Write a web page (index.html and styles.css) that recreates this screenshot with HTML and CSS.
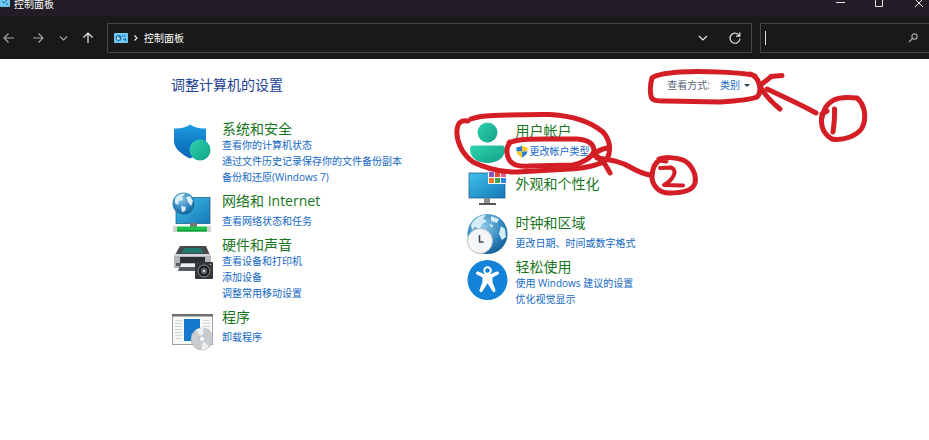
FILE: index.html
```html
<!DOCTYPE html>
<html lang="zh-CN">
<head>
    <meta charset="UTF-8">
    <meta name="viewport" content="width=device-width, initial-scale=1.0">
    <title>控制面板</title>
    <link rel="stylesheet" href="styles.css">
</head>
<body>
    <!-- 标题栏 -->
    <header class="titlebar">
        <svg class="title-icon" viewBox="0 0 10 8">
            <rect y="-6" width="10" height="13" rx="1" fill="#6fc9f2"/>
            <path d="M2 1l2 2 3-3M6 4h2" stroke="#17689f" fill="none"/>
        </svg>
        <span class="title-text">控制面板</span>
        <div class="window-buttons">
            <button type="button" aria-label="最小化"><svg viewBox="0 0 20 10"><path d="M5 2.500h9"/></svg></button>
            <button type="button" aria-label="最大化"><svg viewBox="0 0 20 10"><path d="M5.500-2v8.500h7V-2"/></svg></button>
            <button type="button" aria-label="关闭"><svg viewBox="0 0 20 10"><path d="M6-1l8 8M14-1L6 7"/></svg></button>
        </div>
    </header>

    <!-- 导航栏 -->
    <nav class="toolbar">
        <div class="nav-buttons">
            <button type="button" class="back" aria-label="后退"><svg viewBox="0 0 18 18"><path d="M14 9H4M8.500 4.500L4 9l4.500 4.500"/></svg></button>
            <button type="button" aria-label="前进"><svg viewBox="0 0 18 18"><path d="M4 9h10M9.500 4.500L14 9l-4.500 4.500"/></svg></button>
            <button type="button" aria-label="最近"><svg viewBox="0 0 18 18"><path d="M6 7.500L9.500 11 13 7.500"/></svg></button>
            <button type="button" class="up" aria-label="向上"><svg viewBox="0 0 18 18"><path d="M9 14V4M4.500 8.500L9 4l4.500 4.500"/></svg></button>
        </div>
        <div class="address">
            <svg class="address-icon" viewBox="0 0 14 10">
                <rect width="14" height="10" rx="1" fill="#6fc9f2"/>
                <circle cx="4.500" cy="5" r="2.300" fill="#d9f2fd" stroke="#17689f"/>
                <path d="M4.500 5l2-2M8.500 3h3M9 6.500h1.500M11.500 5v3" stroke="#17689f" fill="none"/>
            </svg>
            <svg class="crumb-arrow" viewBox="0 0 6 10"><path d="M1.500 2.500L4 5 1.500 7.500"/></svg>
            <span class="crumb">控制面板</span>
            <button type="button" aria-label="展开"><svg viewBox="0 0 18 18"><path d="M5 7l4 4 4-4"/></svg></button>
            <button type="button" aria-label="刷新"><svg viewBox="0 0 18 18"><path d="M13.500 7A5 5 0 1 0 14 9.500M13.800 3.500V7.200H10"/></svg></button>
        </div>
        <div class="search">
            <span class="caret"></span>
            <input type="text" aria-label="搜索控制面板">
            <svg viewBox="0 0 12 12"><circle cx="7.500" cy="4.500" r="2.600"/><path d="M5.500 6.500L2 10"/></svg>
        </div>
    </nav>

    <main class="content">
        <div class="content-head">
            <h1>调整计算机的设置</h1>
            <div class="view-by">
                <span id="view-label">查看方式:</span>
                <button type="button" aria-labelledby="view-label view-value"><span id="view-value">类别</span><span class="arrow-down"></span></button>
            </div>
        </div>

        <div class="columns">
            <div class="column">
                <section class="category">
                    <svg class="icon" viewBox="0 0 42 32">
                        <defs>
                            <linearGradient id="shield" x1="0" y1="0" x2="0" y2="1"><stop offset="0" stop-color="#1b9be0"/><stop offset="1" stop-color="#0a63b5"/></linearGradient>
                            <linearGradient id="teal" x1="0" y1="0" x2="1" y2="1"><stop offset="0" stop-color="#2ed3b0"/><stop offset="1" stop-color="#12a086"/></linearGradient>
                        </defs>
                        <path d="M19 4.500c4.500 3 10 4.500 16 4v13c0 8-8 13-16 17-8-4-16-10-16-17v-13c6 .500 12-1 16-4z" fill="url(#shield)"/>
                        <circle cx="29" cy="30" r="10.500" fill="url(#teal)"/>
                    </svg>
                    <div class="category-text">
                        <h2><a href="#">系统和安全</a></h2>
                        <ul>
                            <li><a href="#">查看你的计算机状态</a></li>
                            <li><a href="#">通过文件历史记录保存你的文件备份副本</a></li>
                            <li><a href="#">备份和还原(Windows 7)</a></li>
                        </ul>
                    </div>
                </section>

                <section class="category single">
                    <svg class="icon" viewBox="0 0 42 32">
                        <defs>
                            <linearGradient id="screen" x1="0" y1="0" x2="1" y2="1"><stop offset="0" stop-color="#3fc1ea"/><stop offset="1" stop-color="#1577b8"/></linearGradient>
                            <radialGradient id="globe" cx=".4" cy=".3" r=".8"><stop offset="0" stop-color="#8fc8e8"/><stop offset=".6" stop-color="#2c83bc"/><stop offset="1" stop-color="#0d5688"/></radialGradient>
                        </defs>
                        <rect x="5" y="5.500" width="34" height="26" fill="url(#screen)" stroke="#1c648f" stroke-width=".8"/>
                        <path d="M19 31h7v4h-7z" fill="#777"/>
                        <path d="M5 34.500h33v5H5z" fill="#20c14a"/>
                        <path d="M5 38h33v1.500H5z" fill="#149537"/>
                        <path d="M2 34h4v6H2zM36 34h4v6h-4z" fill="#ccd4d0"/>
                        <circle cx="12.500" cy="11.500" r="11" fill="url(#globe)"/>
                        <path d="M4 7c2-4 6-6 10-5l-3 3 1 3-4 1-1 4-3-2zM15 5l4-1 3 5-2 5-3-4zM10 14l5 1-1 4-3 1z" fill="#d9eef6"/>
                    </svg>
                    <div class="category-text">
                        <h2><a href="#">网络和 Internet</a></h2>
                        <ul>
                            <li><a href="#">查看网络状态和任务</a></li>
                        </ul>
                    </div>
                </section>

                <section class="category">
                    <svg class="icon" viewBox="0 0 42 32">
                        <path d="M9 10h26l4 9H4z" fill="#45494c"/>
                        <path d="M13 12h17l2 5H11z" fill="#237a72"/>
                        <path d="M3 18h37v14H3z" fill="#b2b6b9"/>
                        <path d="M3 18h37v2H3z" fill="#d4d7d9"/>
                        <path d="M9 21h25v6H9z" fill="#2c2f31"/>
                        <path d="M5 27h5v3H5zM9 29h21v6H7z" fill="#55595c"/>
                        <path d="M10 28h19v3H9z" fill="#eceeef"/>
                        <rect x="24" y="26" width="18" height="17" rx="1" fill="#35383a"/>
                        <circle cx="33" cy="35" r="6" fill="#1d1f20" stroke="#8b8f91"/>
                        <circle cx="33" cy="35" r="3.200" fill="#5d6163"/>
                        <circle cx="33" cy="35" r="1.300" fill="#cfd2d3"/>
                        <circle cx="39.500" cy="28.500" r=".8" fill="#bbb"/>
                    </svg>
                    <div class="category-text">
                        <h2><a href="#">硬件和声音</a></h2>
                        <ul>
                            <li><a href="#">查看设备和打印机</a></li>
                            <li><a href="#">添加设备</a></li>
                            <li><a href="#">调整常用移动设置</a></li>
                        </ul>
                    </div>
                </section>

                <section class="category single">
                    <svg class="icon" viewBox="0 0 42 32">
                        <rect x="1.500" y="6.500" width="40" height="30" fill="#f7f8f8" stroke="#9da1a4"/>
                        <path d="M1 6h41v2.500H1z" fill="#6b6f72"/>
                        <path d="M4 12.500h7M4 15.500h7M4 18.500h7M4 21.500h7M4 24.500h7M4 27.500h7M4 30.500h7M32 12.500h7M32 15.500h7M32 18.500h7M32 21.500h7" stroke="#d0d4d7"/>
                        <rect x="13" y="11" width="16" height="22" fill="#1478cf"/>
                        <circle cx="31" cy="31" r="11" fill="#c9cdd0" stroke="#a5aaad" stroke-width=".6"/>
                        <path d="M31 31L25 22a11 11 0 0 1 8-2zM31 31l7 8a11 11 0 0 1-7 3z" fill="#eceeef"/>
                        <circle cx="31" cy="31" r="3.200" fill="#e9ebec" stroke="#a0a5a8" stroke-width=".7"/>
                        <circle cx="31" cy="31" r="1.200" fill="#fff"/>
                    </svg>
                    <div class="category-text">
                        <h2><a href="#">程序</a></h2>
                        <ul>
                            <li><a href="#">卸载程序</a></li>
                        </ul>
                    </div>
                </section>
            </div>

            <div class="column column-right">
                <section class="category single account">
                    <svg class="icon" viewBox="0 0 42 32">
                        <circle cx="22.500" cy="10.500" r="10" fill="url(#teal)"/>
                        <path d="M8 23.500h29c2 0 3 1.500 3 3.500 0 9-8 14-17.500 14S5 36 5 27c0-2 1-3.500 3-3.500z" fill="url(#teal)"/>
                    </svg>
                    <div class="category-text">
                        <h2><a href="#">用户帐户</a></h2>
                        <ul>
                            <li class="with-shield">
                                <svg class="uac" viewBox="0 0 12 13">
                                    <path d="M6 .500C4.500 1.700 2.500 2.300.500 2.200V6.500H6z" fill="#2b7fd0"/>
                                    <path d="M6 .500c1.500 1.200 3.500 1.800 5.500 1.700V6.500H6z" fill="#f8c92b"/>
                                    <path d="M.500 6.500H6v6C3 11 .800 9 .500 6.500z" fill="#f8c92b"/>
                                    <path d="M11.500 6.500H6v6c3-1.500 5.200-3.500 5.500-6z" fill="#2b7fd0"/>
                                </svg>
                                <a href="#">更改帐户类型</a>
                            </li>
                        </ul>
                    </div>
                </section>

                <section class="category">
                    <svg class="icon" viewBox="0 0 42 32">
                        <rect x="4" y="-2" width="36" height="25" fill="url(#screen)" stroke="#1c648f" stroke-width=".8"/>
                        <path d="M19 23h6v5h-6z" fill="#8b8f92"/>
                        <path d="M14 28h17v2H14z" fill="#53575a"/>
                        <path d="M23-4h19V9H23z" fill="#fff"/>
                        <path d="M24-3h5v5h-5z" fill="#8c55bd"/><path d="M30-3h5v5h-5z" fill="#e64b35"/><path d="M36-3h5v5h-5z" fill="#e85a8c"/>
                        <path d="M24 3h5v5h-5z" fill="#f17b2b"/><path d="M30 3h5v5h-5z" fill="#3aa655"/><path d="M36 3h5v5h-5z" fill="#3385d9"/>
                    </svg>
                    <div class="category-text">
                        <h2><a href="#">外观和个性化</a></h2>
                    </div>
                </section>

                <section class="category single">
                    <svg class="icon" viewBox="0 0 42 32">
                        <circle cx="22.500" cy="20" r="20" fill="url(#globe)"/>
                        <path d="M6 11c3-6 9-10 15-10l-3 4 4 2-5 3-2 5-5-2-3 3zM26 2l8 3-2 4-6-2zM36 12l4 3 1 8-4 3-3-6zM24 10l4 1-1 3z" fill="#d5edf6"/>
                        <circle cx="15" cy="27" r="12.500" fill="#f4f6f7" stroke="#b9c1c6"/>
                        <path d="M14.500 21v7h4" fill="none" stroke="#34495a" stroke-width="1.500"/>
                    </svg>
                    <div class="category-text">
                        <h2><a href="#">时钟和区域</a></h2>
                        <ul>
                            <li><a href="#">更改日期、时间或数字格式</a></li>
                        </ul>
                    </div>
                </section>

                <section class="category">
                    <svg class="icon" viewBox="0 0 42 32">
                        <circle cx="22.500" cy="22" r="20" fill="#1283d8"/>
                        <circle cx="22.500" cy="12.500" r="3.300" fill="none" stroke="#fff" stroke-width="2"/>
                        <path d="M11 15c0-1.500 1.500-2 3-1.300l5 2.300h7l5-2.300c1.500-.7 3-.2 3 1.300 0 .8-.5 1.400-1.300 1.800L27.500 19.500v4.500l3 8c.5 2-2 3-3 1.300l-5-8-5 8c-1 1.700-3.500.7-3-1.300l3-8v-4.500l-5.200-2.700C11.500 16.400 11 15.800 11 15z" fill="#fff"/>
                    </svg>
                    <div class="category-text">
                        <h2><a href="#">轻松使用</a></h2>
                        <ul>
                            <li><a href="#">使用 Windows 建议的设置</a></li>
                            <li><a href="#">优化视觉显示</a></li>
                        </ul>
                    </div>
                </section>
            </div>
        </div>

        <!-- 手绘标注：步骤 1 和步骤 2 -->
        <svg class="marks" viewBox="171 59 700 150" aria-hidden="true">
            <path d="M755 76C745 72 700 71 680 72 667 73 655 75 652 78 650 85 650 91 651 96 652 101 657 101 666 101L720 102C736 101 750 100 757 97 763 91 759 76 750 74"/>
            <path d="M782 75.500L771 76.500C768 80 763 82 760 86 763 92 769 100 780 109"/>
            <path d="M767 89C784 97 800 104 816 113"/>
            <path d="M827 111L822 114C820 126 823 134 832 139 843 141 857 136 862 128 867 118 865 105 857 98 848 97 838 97 832 101 826 105 823 110 822 118"/>
            <path d="M834.500 109C835 118 834 125 833 132"/>
            <path d="M471 119C480 115 500 115 550 114.500 574 116 591 122 603 132 611 141 611 152 607 159 599 166 585 168 570 169L517 172C500 172 485 168 473 162 462 154 456 141 457 130 458 122 461 120 468 121"/>
            <path d="M509 143C517 139 530 139 545 139L577 139C590 140 594 145 594 151 592 158 582 163 573 165L530 166C519 167 513 165 510 161 506 155 506 148 510 142"/>
            <path d="M607 148C602 149 597 151 593 155 600 156 605 163 610 173"/>
            <path d="M597 158C610 160 620 161 630 167 637 171 643 174 650 175"/>
            <path d="M666 161L660 160C654 163 652 171 652 178 653 187 660 193 669 193 680 193 693 191 695 183 697 173 690 163 683 160 675 157 665 157 659 159"/>
            <path class="digit" d="M660 168L671 167.500C678 170 674 179 664 185L683 185.500"/>
        </svg>
    </main>
</body>
</html>
```
FILE: styles.css
```css
* {
    box-sizing: border-box;
}
body {
    margin: 0;
    background: #fff;
    font-family: 'Open Sans', 'Noto Sans CJK SC', sans-serif;
    font-size: 10px;
    line-height: 16px;
}
button {
    padding: 0;
    border: none;
    background: none;
    font: inherit;
    color: inherit;
}
a {
    color: inherit;
    text-decoration: none;
}
a:hover {
    text-decoration: underline;
}

/* 标题栏 */
.titlebar {
    display: flex;
    align-items: flex-start;
    gap: 4px;
    height: 16px;
    overflow: hidden;
    background: #231d28;
    color: #fff;
}
.title-icon {
    width: 10px;
    height: 8px;
}
.title-text {
    line-height: 8px;
}
.window-buttons {
    display: flex;
    gap: 19px;
    margin-left: auto;
}
.window-buttons svg {
    display: block;
    width: 20px;
    height: 10px;
    fill: none;
    stroke: #e4e4e4;
}

/* 导航栏 */
.toolbar {
    display: flex;
    align-items: center;
    gap: 8px;
    height: 43px;
    background: #191919;
    color: #fff;
}
.toolbar svg {
    display: block;
    fill: none;
    stroke: #e8e8e8;
    stroke-width: 1.2;
}
.toolbar button svg {
    width: 18px;
    height: 18px;
}
.nav-buttons {
    display: flex;
    gap: 7px;
    padding-right: 2px;
}
.nav-buttons svg {
    stroke: #a5a5a5;
}
.nav-buttons .up svg {
    stroke: #f0f0f0;
}
.nav-buttons .back {
    margin-right: 4px;
}
.address {
    display: flex;
    flex: 1;
    align-items: center;
    gap: 5px;
    height: 30px;
    padding: 0 7px 0 6px;
    border: 1px solid #454545;
}
.toolbar .address-icon {
    width: 14px;
    height: 10px;
    stroke: none;
}
.crumb-arrow {
    width: 6px;
    height: 10px;
}
.crumb {
    flex: 1;
}
.address button + button {
    margin-left: 9px;
}
.search {
    display: flex;
    align-items: center;
    width: 169px;
    height: 30px;
    padding: 0 10px 0 4px;
    border: 1px solid #454545;
    border-right: none;
}
.caret {
    width: 1px;
    height: 14px;
    background: #e0e0e0;
}
.search input {
    flex: 1;
    min-width: 0;
    border: none;
    outline: none;
    background: none;
    color: #fff;
    font: inherit;
}
.search svg {
    width: 12px;
    height: 12px;
    stroke: #a5a5a5;
}

/* 内容区 */
.content {
    position: relative;
    max-width: 587px;
    margin: 0 auto;
    padding: 16px 0 20px;
}
.content-head {
    display: flex;
    justify-content: space-between;
    align-items: center;
    padding-right: 8px;
}
h1 {
    margin: 0;
    font-size: 14px;
    line-height: 20px;
    font-weight: normal;
    color: #1c3f94;
}
.view-by {
    display: flex;
    gap: 10px;
    color: #5a6478;
}
.view-by button {
    display: flex;
    align-items: center;
    gap: 4px;
    color: #1267c4;
}
.arrow-down {
    border: 3px solid transparent;
    border-top-color: #24466e;
    border-bottom: none;
}
.columns {
    display: grid;
    grid-template-columns: 1fr 1fr;
    padding-top: 25px;
}
.column {
    display: flex;
    flex-direction: column;
    gap: 7px;
}
.column-right {
    padding-top: 2px;
}
.category {
    display: flex;
    gap: 9px;
}
.icon {
    flex: none;
    width: 42px;
    height: 32px;
    overflow: visible;
}
.account {
    padding-bottom: 9px;
}
h2 {
    margin: 0;
    font-size: 14px;
    line-height: 17px;
    font-weight: normal;
    color: #17751b;
}
.category ul {
    margin: 0;
    padding: 0;
    list-style: none;
    color: #1267c4;
    white-space: nowrap;
}
.single ul {
    padding-top: 4px;
}
.with-shield {
    display: flex;
    align-items: center;
    gap: 2px;
}
.uac {
    width: 12px;
    height: 13px;
}

/* 红色手绘标注 */
.marks {
    position: absolute;
    top: 0;
    left: 0;
    width: 700px;
    height: 150px;
    fill: none;
    stroke: #d31e25;
    stroke-width: 5;
    stroke-linecap: round;
    stroke-linejoin: round;
    pointer-events: none;
}
.marks .digit {
    stroke-width: 4;
}
```
